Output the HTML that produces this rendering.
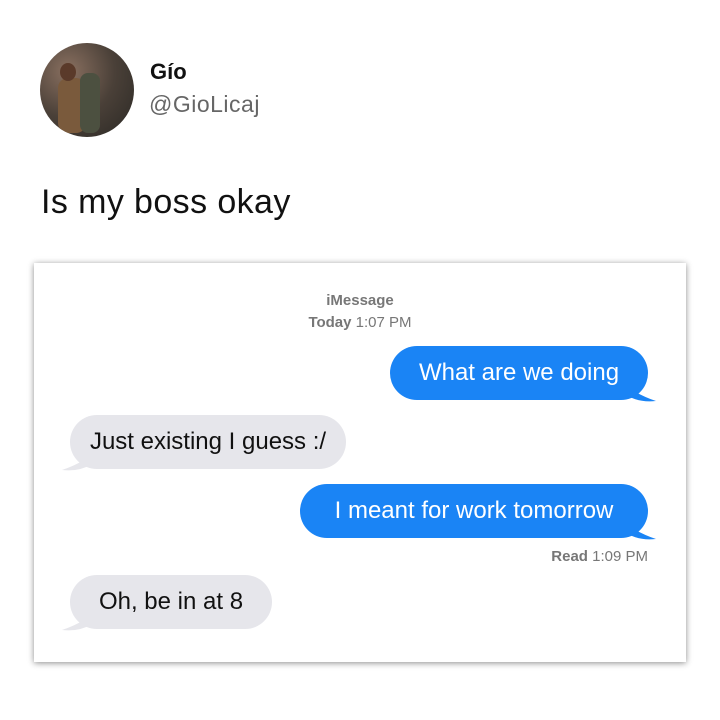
<!DOCTYPE html>
<html><head><style>
body{margin:0;width:720px;height:720px;background:#fff;font-family:"Liberation Sans",sans-serif;position:relative;overflow:hidden}
.a{position:absolute}
.av{left:40px;top:43px;width:94px;height:94px;border-radius:50%;background:radial-gradient(circle at 30% 30%,#8a7060,#4a4038 50%,#2a2824);overflow:hidden}
.card{left:34px;top:263px;width:652px;height:399px;background:#fff;box-shadow:0 1px 6px rgba(0,0,0,.45)}
.b{position:absolute;height:54px;border-radius:27px;font-size:24px;line-height:54px;box-sizing:border-box;text-align:center;white-space:nowrap}
.blue{background:#1a84f5;color:#fff}
.gray{background:#e6e6eb;color:#111}
.meta{position:absolute;font-size:15px;color:#777;font-weight:bold}
</style></head><body>
<div class="a av"><div class="a" style="left:18px;top:35px;width:28px;height:55px;background:#7a5a3c;border-radius:10px"></div><div class="a" style="left:40px;top:30px;width:20px;height:60px;background:#4c5040;border-radius:8px"></div><div class="a" style="left:20px;top:20px;width:16px;height:18px;background:#5a3a2a;border-radius:50%"></div></div>
<div class="a" style="left:150px;top:59px;font-size:22px;font-weight:bold;color:#111">Gío</div>
<div class="a" style="left:149px;top:91px;font-size:23px;color:#666;letter-spacing:0.5px">@GioLicaj</div>
<div class="a" style="left:41px;top:183px;font-size:34px;color:#111;letter-spacing:0.4px">Is my boss okay</div>
<div class="a card">
<div class="meta" style="left:0;width:652px;text-align:center;top:29px">iMessage</div>
<div class="meta" style="left:0;width:652px;text-align:center;top:51px">Today <span style="font-weight:normal">1:07 PM</span></div>
<div class="b blue" style="left:356px;top:83px;width:258px">What are we doing</div>
<div class="b gray" style="left:36px;top:152px;width:276px">Just existing I guess :/</div>
<div class="b blue" style="left:266px;top:221px;width:348px">I meant for work tomorrow</div>
<div class="meta" style="right:38px;top:285px">Read <span style="font-weight:normal">1:09 PM</span></div>
<div class="b gray" style="left:36px;top:312px;width:202px">Oh, be in at 8</div>
<svg class="a" style="left:0;top:0" width="652" height="399">
<path d="M600 128 Q610 134 622 138 Q605 140 592 132Z" fill="#1a84f5"/>
<path d="M600 266 Q610 272 622 276 Q605 278 592 270Z" fill="#1a84f5"/>
<path d="M50 197 Q40 203 28 207 Q45 209 58 201Z" fill="#e6e6eb"/>
<path d="M50 357 Q40 363 28 367 Q45 369 58 361Z" fill="#e6e6eb"/>
</svg>
</div>
</body></html>
